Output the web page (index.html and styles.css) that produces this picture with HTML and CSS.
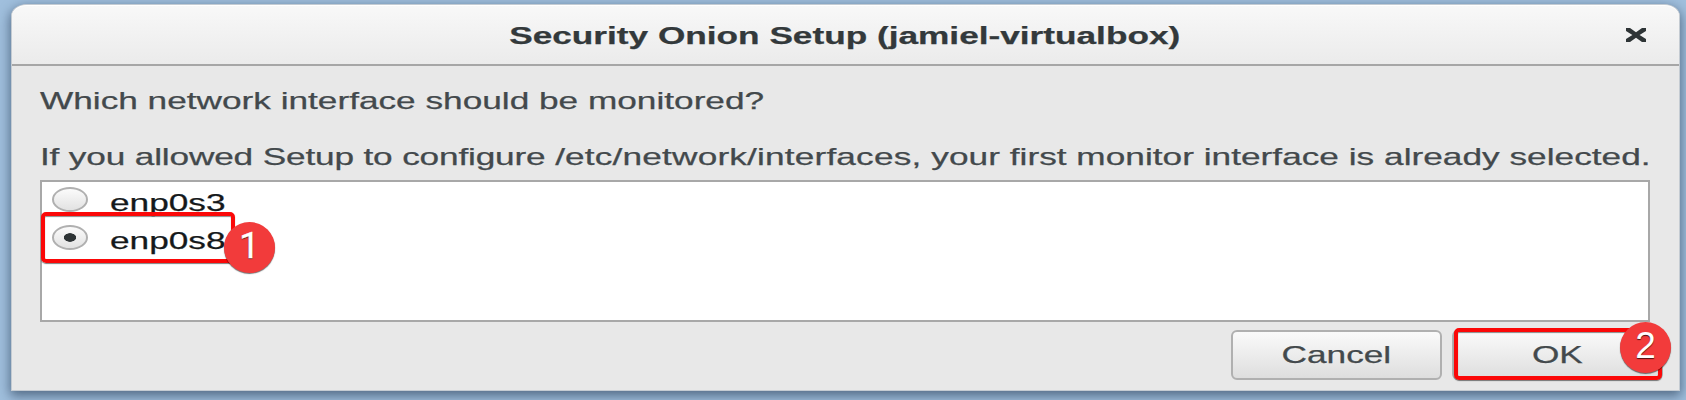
FILE: index.html
```
<!DOCTYPE html>
<html lang="en">
<head>
<meta charset="utf-8">
<title>Security Onion Setup</title>
<link rel="stylesheet" href="styles.css">
</head>
<body>
<main class="window">
  <header class="titlebar">
    <h1 class="title"><span class="wide wide-center">Security Onion Setup (jamiel-virtualbox)</span></h1>
    <svg class="close" viewBox="0 0 20 14" preserveAspectRatio="none"><path d="M0 0H4L10 4.2L16 0H20V3L13.6 7L20 11V14H16L10 9.8L4 14H0V11L6.4 7L0 3Z"/></svg>
  </header>
  <section class="content">
    <p class="line"><span class="wide">Which network interface should be monitored?</span></p>
    <p class="line"><span class="wide"><span class="tight">If you allowed Setup to configure </span><span class="loose">/etc/network/interfaces, </span><span class="even">your first monitor interface is already selected.</span></span></p>
    <div class="list">
      <div class="row"><span class="radio"></span><span class="wide">enp0s3</span></div>
      <div class="row"><span class="radio checked"></span><span class="wide">enp0s8</span>
        <div class="mark mark-row"><span class="badge badge-row">1</span></div>
      </div>
    </div>
    <footer class="actions">
      <div class="button"><span class="wide wide-center">Cancel</span></div>
      <div class="button"><span class="wide wide-center">OK</span>
        <div class="mark mark-button"><span class="badge badge-button">2</span></div>
      </div>
    </footer>
  </section>
</main>
</body>
</html>
```
FILE: styles.css
```
* { box-sizing: border-box; }
html, body { height: 100%; }
body {
  margin: 0;
  padding: 4px 6px 9px 11px;
  overflow: hidden;
  background: #a0bfdd;
  font: 24px/28px "Liberation Sans", Arial, sans-serif;
  color: #43494c;
}
.window {
  height: 387px;
  display: flex;
  flex-direction: column;
  background: #e8e8e8;
  border: 1px solid #c4cbd2;
  border-radius: 16px 16px 0 0 / 12px 12px 0 0;
  box-shadow: 0 4px 12px 1px rgba(30, 50, 75, .6);
}
.titlebar {
  position: relative;
  height: 61px;
  flex: none;
  display: flex;
  align-items: center;
  justify-content: center;
  background: linear-gradient(#f8f8f8, #ebebeb);
  border-top: 1px solid #fff;
  border-bottom: 2px solid #a6a6a6;
  border-radius: 15px 15px 0 0 / 11px 11px 0 0;
}
.title { margin: 2px 1px 0 0; font-size: 24px; color: #33393b; }
.close { position: absolute; right: 33px; top: 22px; width: 20px; height: 14px; fill: #2e3436; }
.wide {
  display: inline-block;
  white-space: nowrap;
  transform: scaleX(1.467);
  transform-origin: 0 50%;
  -webkit-text-stroke: .25px currentColor;
}
.wide-center { transform-origin: 50% 50%; }
.tight { letter-spacing: -.11px; }
.loose { letter-spacing: .12px; }
.even { letter-spacing: .015px; }
.content { display: flex; flex-direction: column; padding: 21px 29px 0 28px; }
.line { margin: 0 0 28px; height: 28px; }
.line + .line { margin-bottom: 9px; }
.list {
  height: 142px;
  margin-bottom: 8px;
  padding: 1px 0 0 10px;
  background: #fff;
  border: 2px solid #a8a8a8;
}
.row { position: relative; display: flex; align-items: center; gap: 22px; height: 38px; color: #15191b; }
.row .wide { padding-top: 1px; }
.radio {
  width: 36px;
  height: 25px;
  margin-bottom: 5px;
  flex: none;
  border: 2px solid #b0b0b0;
  border-radius: 50%;
  background: linear-gradient(#fbfbfb, #e2e2e2);
}
.checked { background: radial-gradient(6.5px 4.5px, #2e3436 88%, transparent), linear-gradient(#fbfbfb, #e2e2e2); }
.actions { display: flex; justify-content: flex-end; gap: 10px; margin-right: -13px; }
.button {
  position: relative;
  width: 211px;
  height: 50px;
  display: flex;
  align-items: center;
  justify-content: center;
  border: 2px solid #b0b0b0;
  border-radius: 6px;
  background: linear-gradient(#fafafa, #dedede);
}
.mark {
  position: absolute;
  border: 4px solid #fb0808;
  border-radius: 5px;
  box-shadow: 0 1px 1px rgba(0, 0, 0, .5), inset 0 1px 1px rgba(0, 0, 0, .45);
}
.mark-row { left: -11px; top: -9px; width: 194px; height: 51px; }
.mark-button { left: 0; top: -4px; width: 208px; height: 52px; }
.badge {
  position: absolute;
  width: 51px;
  height: 51px;
  border-radius: 50%;
  background: #f23b3b;
  box-shadow: 0 1px 1px rgba(0, 0, 0, .55);
  color: #fff;
  text-align: center;
  font-size: 37px;
  line-height: 48px;
  text-shadow: 0 1px 1px rgba(0, 0, 0, .7);
}
.badge-row { left: 179px; top: 6px; font-family: Roboto, sans-serif; -webkit-text-stroke: .3px #fff; }
.badge-button { left: 162px; top: -10px; }
```
